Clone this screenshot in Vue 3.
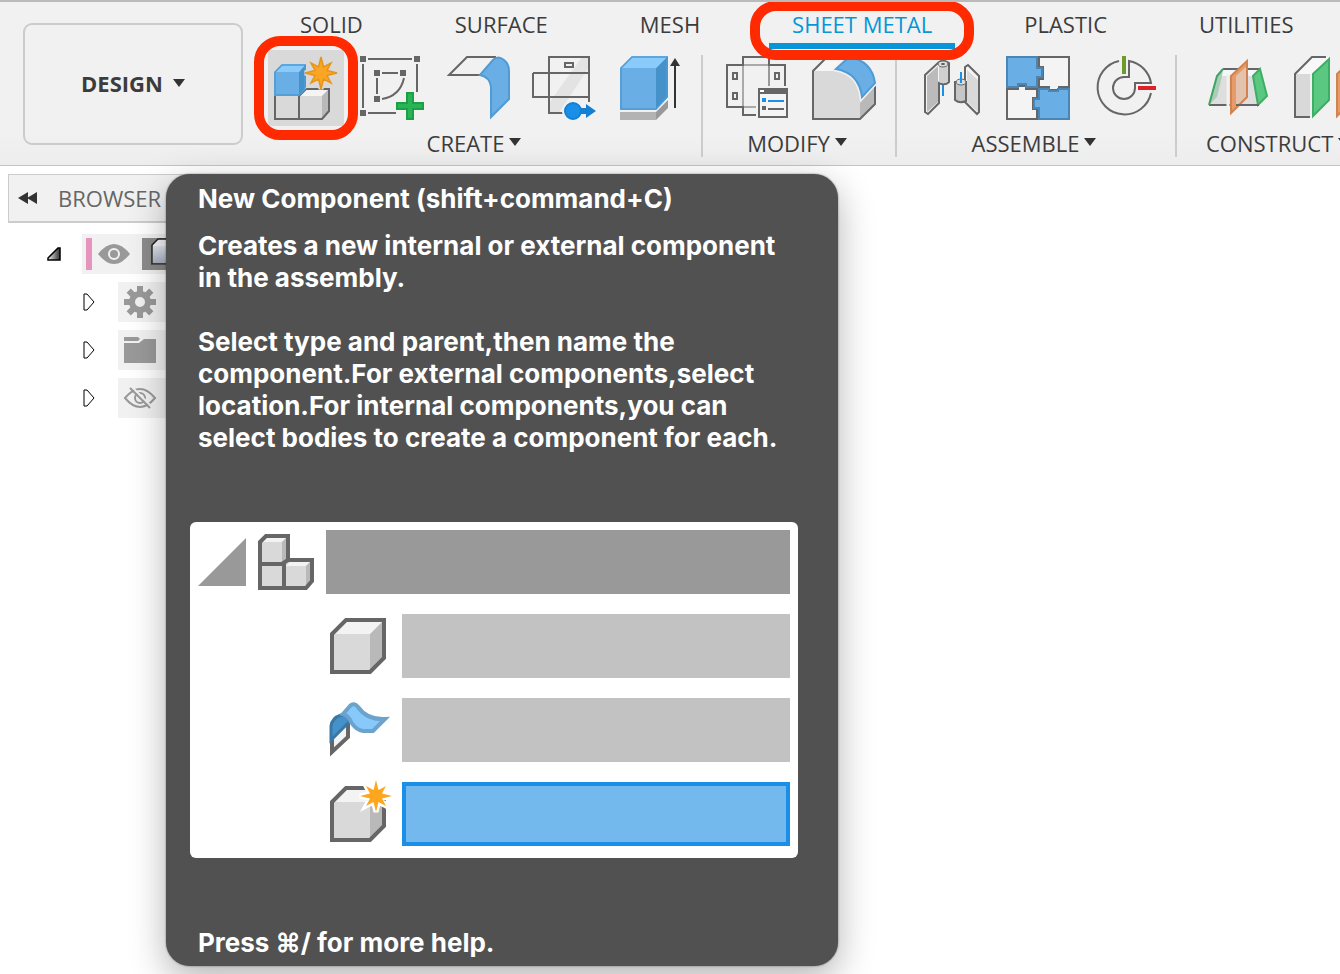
<script setup>
import { ref } from 'vue';

const tabs = ['SOLID', 'SURFACE', 'MESH', 'SHEET METAL', 'PLASTIC', 'UTILITIES'];
const activeTab = ref('SHEET METAL');

const star = '0,-16 2.5,-6 10,-10 6,-2.5 16,0 6,2.5 10,10 2.5,6 0,16 -2.5,6 -10,10 -6,2.5 -16,0 -6,-2.5 -10,-10 -2.5,-6';
</script>

<template>
    <div class="app">
        <header class="toolbar">
            <button class="workspace">
                DESIGN
                <svg class="caret" viewBox="0 0 12 8"><path d="M0 0H12L6 8Z" /></svg>
            </button>

            <div class="ribbon">
                <nav class="tabs">
                    <button
                        v-for="tab in tabs"
                        :key="tab"
                        class="tab"
                        :class="{ active: tab === activeTab, marked: tab === 'SHEET METAL' }"
                        @click="activeTab = tab"
                    >{{ tab }}</button>
                </nav>

                <div class="panels">
                    <section class="panel">
                        <div class="tools">
                            <button class="tool hovered marked" aria-label="New Component">
                                <svg viewBox="0 0 64 64">
                                    <path d="M1 40H25V63H1Z" fill="#d9d9d9" />
                                    <path d="M25 40L32 33H55L48 40Z" fill="#f4f4f4" />
                                    <path d="M25 40H48V63H25Z" fill="#d9d9d9" />
                                    <path d="M48 40L55 33V54L48 63Z" fill="#b9b9b9" />
                                    <path d="M1 40V63H48L55 55V33H32L25 40V63" class="line" />
                                    <path d="M0 16L8 8H32L25 16Z" fill="#8acbfb" />
                                    <path d="M0 16H25V40H0Z" fill="#69afe5" />
                                    <path d="M25 16L32 8V33L25 40Z" fill="#4591ca" />
                                    <path d="M1 39V16L8 9H31V33L25 39Z" fill="none" stroke="#4f9bd5" stroke-width="1.5" />
                                    <g transform="translate(47 17)">
                                        <polygon :points="star" fill="#d9d9d9" stroke="#d9d9d9" stroke-width="5" />
                                        <polygon :points="star" fill="#fba524" stroke="#e6951a" stroke-width="1.5" />
                                    </g>
                                </svg>
                            </button>
                            <button class="tool" aria-label="Create Sketch">
                                <svg viewBox="0 0 64 64">
                                    <path d="M8 3H52M3 8V52M57 8V36M8 57H36M22 17H38M17 22V38M44 22Q40 40 22 43" class="line" />
                                    <path d="M0 0H6V6H0ZM54 0H60V6H54ZM0 54H6V60H0ZM14 14H20V20H14ZM40 14H46V20H40ZM14 40H20V46H14Z" fill="#666" />
                                    <path d="M47 37H53V47H63V53H53V63H47V53H37V47H47Z" fill="#29b456" stroke="#1aa047" stroke-width="2" />
                                </svg>
                            </button>
                            <button class="tool" aria-label="Flange">
                                <svg viewBox="0 0 64 64">
                                    <path d="M50 1H21L3 19H34" class="line" />
                                    <path d="M34 19L47 4Q52 -1 58 4Q63 8 63 15V43L45 61V31Q44 21 34 19Z" fill="#69afe5" stroke="#4f9bd5" stroke-width="2" />
                                </svg>
                            </button>
                            <button class="tool" aria-label="Unfold">
                                <svg viewBox="0 0 64 64">
                                    <path d="M50 1H57V11L27 57H17V47Z" fill="#e3e3e3" />
                                    <path d="M57 46V1H17V57H31M1 17H57M1 17V41H57M33 7H41V11H33Z" class="line" />
                                    <circle cx="41" cy="55" r="11" fill="#f1f1f1" />
                                    <path d="M48 52H54V48L64 55L54 62V58H48Z" fill="#1480d4" />
                                    <circle cx="41" cy="55" r="8" fill="#1a8fe8" stroke="#1480d4" stroke-width="2" />
                                </svg>
                            </button>
                            <button class="tool" aria-label="Extrude">
                                <svg viewBox="0 0 64 64">
                                    <path d="M2 56H38V64H2Z" fill="#b3b3b3" />
                                    <path d="M38 56L50 44V52L38 64Z" fill="#999" />
                                    <path d="M2 12L14 0H50L38 12Z" fill="#8acbfb" />
                                    <path d="M2 12H38V54H2Z" fill="#69afe5" />
                                    <path d="M38 12L50 0V41L38 54Z" fill="#4591ca" />
                                    <path d="M3 53V12L14 1H49V41L38 53Z" fill="none" stroke="#4f9bd5" stroke-width="1.5" />
                                    <path d="M57 52V9" stroke="#333" stroke-width="2" />
                                    <path d="M52 10L57 2L62 10Z" fill="#333" />
                                </svg>
                            </button>
                        </div>
                        <button class="panel-label">CREATE<svg class="caret" viewBox="0 0 12 8"><path d="M0 0H12L6 8Z" /></svg></button>
                    </section>

                    <section class="panel">
                        <div class="tools">
                            <button class="tool" aria-label="Sheet Metal Rules">
                                <svg viewBox="0 0 64 64">
                                    <path d="M17 9H43V30M17 9V51H30" fill="none" stroke="#aaa" stroke-width="2" />
                                    <path d="M59 30V9H43V1H17V9H1V51H17V59H30M7 17H11V23H7ZM7 37H11V43H7ZM49 17H53V23H49Z" class="line" />
                                    <path d="M43 10V30" stroke="#999" stroke-width="2" />
                                    <path d="M33 33H61V61H33Z" fill="#f4f4f4" stroke="#666" stroke-width="2" />
                                    <path d="M32 32H62V38H32Z" fill="#666" />
                                    <path d="M34 34H38V36H34Z" fill="#fff" />
                                    <path d="M36 42H40V46H36ZM42 44H58V46H42Z" fill="#1a8fe8" />
                                    <path d="M36 50H40V54H36ZM42 52H58V54H42Z" fill="#666" />
                                </svg>
                            </button>
                            <button class="tool" aria-label="Fillet">
                                <svg viewBox="0 0 64 64">
                                    <path d="M1 15L15 1H36L24 15Z" fill="#f6f6f6" />
                                    <path d="M1 15H22Q47 19 48 44V63H1Z" fill="#d9d9d9" />
                                    <path d="M48 44L63 30V48L48 63Z" fill="#b9b9b9" />
                                    <path d="M32 1H15L1 15V63H48L63 48V29" class="line" />
                                    <path d="M24 13L37 1Q60 5 63 27L50 41Q47 17 24 13Z" fill="#69afe5" stroke="#f1f1f1" stroke-width="5" />
                                    <path d="M24 13L37 1Q60 5 63 27L50 41Q47 17 24 13Z" fill="#69afe5" stroke="#4f9bd5" stroke-width="2" />
                                </svg>
                            </button>
                        </div>
                        <button class="panel-label">MODIFY<svg class="caret" viewBox="0 0 12 8"><path d="M0 0H12L6 8Z" /></svg></button>
                    </section>

                    <section class="panel">
                        <div class="tools">
                            <button class="tool" aria-label="Joint">
                                <svg viewBox="0 0 64 64">
                                    <path d="M5 19L19 6Q24 3 29 7V26Q25 30 19 27V47L8 58L5 56Z" fill="#f4f4f4" class="outline" />
                                    <path d="M7 20L18 10V46L7 56Z" fill="#bbb" />
                                    <path d="M19 9V26Q24 29 28 25V9Z" fill="#cfcfcf" />
                                    <ellipse cx="23" cy="8" rx="5" ry="3" fill="#ddd" stroke="#666" />
                                    <ellipse cx="23" cy="8" rx="2" ry="1" fill="#555" />
                                    <path d="M23 29V40" stroke="#1a8fe8" stroke-width="2" />
                                    <path d="M45 24V11L48 9L59 20V56L57 58L45 46Z" fill="#f4f4f4" class="outline" />
                                    <path d="M47 14L58 24V56L47 46Z" fill="#d9d9d9" />
                                    <path d="M35 26V44Q40 48 46 45V26Z" fill="#c6c6c6" class="outline" />
                                    <ellipse cx="41" cy="26" rx="5" ry="3" fill="#ddd" stroke="#666" />
                                    <path d="M41 16V27" stroke="#1a8fe8" stroke-width="2" />
                                </svg>
                            </button>
                            <button class="tool" aria-label="Rigid Group">
                                <svg viewBox="0 0 64 64">
                                    <path d="M33 1H63V31H53V34H43V31H33V23H37V11H33Z" fill="#f4f4f4" class="outline" />
                                    <path d="M1 33H12V30H20V33H31V42H27V53H31V63H1Z" fill="#f4f4f4" class="outline" />
                                    <path d="M1 1H31V12H36V21H31V31H20V28H12V31H1Z" fill="#69afe5" stroke="#4a86b5" stroke-width="2" />
                                    <path d="M33 33H43V35H52V33H63V63H33V52H28V43H33Z" fill="#69afe5" stroke="#4a86b5" stroke-width="2" />
                                </svg>
                            </button>
                            <button class="tool" aria-label="Joint Origin">
                                <svg viewBox="0 0 64 64">
                                    <path d="M27 5A27 27 0 1 0 59 37M32 21A11 11 0 1 0 43 32V27H59A27 27 0 0 0 37 5V21H32" class="line" />
                                    <path d="M30 0H34V18H30Z" fill="#6d9b2c" />
                                    <path d="M46 30H64V34H46Z" fill="#dd2127" />
                                </svg>
                            </button>
                        </div>
                        <button class="panel-label">ASSEMBLE<svg class="caret" viewBox="0 0 12 8"><path d="M0 0H12L6 8Z" /></svg></button>
                    </section>

                    <section class="panel wide">
                        <div class="tools">
                            <button class="tool" aria-label="Midplane">
                                <svg viewBox="0 0 64 64">
                                    <path d="M11 20H48L53 49H3Z" fill="#dedede" />
                                    <path d="M17 13H54L47 20H11Z" fill="#f6f6f6" />
                                    <path d="M3 49L11 20L17 13L16 20L11 41Z" fill="#abcdb8" />
                                    <path d="M17 13H54M3 49H53" class="line" />
                                    <path d="M17 13L11 20L3 49" fill="none" stroke="#3ba561" stroke-width="2" />
                                    <path d="M47 20L54 13L61 40L52 49Z" fill="#5ac880" stroke="#3eae64" stroke-width="2" />
                                    <path d="M22 18V62" stroke="#f1f1f1" stroke-width="3" />
                                    <path d="M30 17L42 5V41L30 52Z" fill="#e3c3ae" />
                                    <path d="M42 5L25 20V57L30 52V20L42 9Z" fill="#e79b68" />
                                    <path d="M25 20L41 5V41L25 57Z" fill="none" stroke="#d08350" stroke-width="2" />
                                    <path d="M30 49H53" class="line" />
                                </svg>
                            </button>
                            <button class="tool" aria-label="Offset Plane">
                                <svg viewBox="0 0 64 64">
                                    <path d="M3 18L20 1H38L20 18Z" fill="#f8f8f8" />
                                    <path d="M3 18H18V61H3Z" fill="#d9d9d9" />
                                    <path d="M18 61H3V18L20 1H34" class="line" />
                                    <path d="M21 18L37 3V44L21 60Z" fill="#5ac880" stroke="#3eae64" stroke-width="2" />
                                    <path d="M45 18L61 3V44L45 60Z" fill="#e79b68" stroke="#d08350" stroke-width="2" />
                                </svg>
                            </button>
                        </div>
                        <button class="panel-label">CONSTRUCT<svg class="caret" viewBox="0 0 12 8"><path d="M0 0H12L6 8Z" /></svg></button>
                    </section>
                </div>
            </div>
        </header>

        <aside class="browser">
            <div class="browser-head">
                <button class="collapse" aria-label="Collapse browser">
                    <svg viewBox="0 0 20 12"><path d="M0 6L10 0V12ZM9 6L19 0V12Z" fill="#333" /></svg>
                </button>
                BROWSER
            </div>
            <ul class="tree">
                <li class="node root">
                    <svg class="arrow-open" viewBox="0 0 14 14">
                        <defs>
                            <linearGradient id="arrowFill" x1="0" y1="0" x2="1" y2="0">
                                <stop offset="0" stop-color="#eee" />
                                <stop offset="1" stop-color="#333" />
                            </linearGradient>
                        </defs>
                        <path d="M1 13V11L11 1H13V13Z" fill="url(#arrowFill)" stroke="#000" stroke-width="1.5" />
                    </svg>
                    <div class="node-body">
                        <span class="stripe"></span>
                        <svg class="node-icon" viewBox="0 0 32 32">
                            <path d="M0 16Q16 -4 32 16Q16 36 0 16Z" fill="#999" />
                            <circle cx="16" cy="16" r="5" fill="#999" stroke="#f1f1f1" stroke-width="2" />
                        </svg>
                        <span class="node-type">
                            <svg viewBox="0 0 32 32">
                                <defs>
                                    <linearGradient id="cubeFill" x1="0" y1="0" x2="0" y2="1">
                                        <stop offset="0" stop-color="#e3e6ee" />
                                        <stop offset="1" stop-color="#a9afc0" />
                                    </linearGradient>
                                </defs>
                                <path d="M1 8L7 1H32V27H1Z" fill="#f4f4f6" />
                                <path d="M2 8H32V26H2Z" fill="url(#cubeFill)" />
                                <path d="M32 1H7L1 7V26H32" fill="none" stroke="#222" stroke-width="1.5" />
                            </svg>
                        </span>
                    </div>
                </li>
                <li class="node">
                    <svg class="arrow" viewBox="0 0 12 18"><path d="M1 1H4L11 9L4 17H1Z" /></svg>
                    <div class="node-body">
                        <svg class="node-icon" viewBox="0 0 32 32">
                            <g fill="#999">
                                <path d="M13 0H19V32H13ZM0 13H32V19H0Z" />
                                <path d="M13 0H19V32H13ZM0 13H32V19H0Z" transform="rotate(45 16 16)" />
                            </g>
                            <circle cx="16" cy="16" r="8" fill="#f1f1f1" stroke="#999" stroke-width="6" />
                        </svg>
                    </div>
                </li>
                <li class="node">
                    <svg class="arrow" viewBox="0 0 12 18"><path d="M1 1H4L11 9L4 17H1Z" /></svg>
                    <div class="node-body">
                        <svg class="node-icon" viewBox="0 0 32 32">
                            <path d="M0 3H14L16 5L14 7H0ZM0 9H15L20 5H32V29H0Z" fill="#999" />
                        </svg>
                    </div>
                </li>
                <li class="node">
                    <svg class="arrow" viewBox="0 0 12 18"><path d="M1 1H4L11 9L4 17H1Z" /></svg>
                    <div class="node-body">
                        <svg class="node-icon" viewBox="0 0 32 32">
                            <path d="M1 16Q16 -2 31 16Q16 34 1 16Z" fill="none" stroke="#999" stroke-width="2" />
                            <circle cx="16" cy="16" r="5" fill="none" stroke="#999" stroke-width="2" />
                            <path d="M8 5L28 25" stroke="#f1f1f1" stroke-width="2" />
                            <path d="M6 6L26 26" stroke="#999" stroke-width="2" />
                        </svg>
                    </div>
                </li>
            </ul>
        </aside>

        <div class="tooltip" role="tooltip">
            <h2>New Component (shift+command+C)</h2>
            <p>Creates a new internal or external component<br>in the assembly.</p>
            <p>Select type and parent,then name the<br>component.For external components,select<br>location.For internal components,you can<br>select bodies to create a component for each.</p>

            <div class="preview">
                <div class="preview-row">
                    <svg class="twisty" viewBox="0 0 48 48"><path d="M0 48L48 0V48Z" fill="#999" /></svg>
                    <svg class="glyph" viewBox="0 0 56 56">
                        <path d="M2 8L8 2H30V26H54V47L48 54H2Z" fill="#d9d9d9" />
                        <path d="M4 8L8 4H28L24 8ZM28 32L32 28H52L48 32Z" fill="#f3f3f3" />
                        <path d="M24 8L28 4V26L24 28ZM48 32L52 28V48L48 52Z" fill="#b9b9b9" />
                        <path d="M2 8L8 2H30V26H54V47L48 54H2ZM2 30H24L30 26M26 54V30" class="thick" />
                    </svg>
                    <span class="bar dark"></span>
                </div>
                <div class="preview-row child">
                    <svg class="glyph" viewBox="0 0 56 56">
                        <path d="M2 16L16 2H54L40 16Z" fill="#f3f3f3" />
                        <path d="M2 16H40V54H2Z" fill="#d9d9d9" />
                        <path d="M40 16L54 2V40L40 54Z" fill="#b9b9b9" />
                        <path d="M2 16L16 2H54V40L40 54H2Z" class="thick" />
                    </svg>
                    <span class="bar"></span>
                </div>
                <div class="preview-row child">
                    <svg class="glyph" viewBox="0 0 56 56">
                        <path d="M2 36V50L18 35V20Z" fill="#f3f3f3" class="thick" />
                        <path d="M1 38V24Q2 16 11 13L19 12V20Z" fill="#4591ca" stroke="#3878a8" stroke-width="3" />
                        <path d="M13 12L20 4Q24 0 28 5Q37 18 55 17L43 29H33Q26 28 21 20Q18 13 13 12Z" fill="#87c9fb" stroke="#6ba3cd" stroke-width="4" />
                    </svg>
                    <span class="bar"></span>
                </div>
                <div class="preview-row child">
                    <svg class="glyph" viewBox="0 0 56 56">
                        <path d="M2 16L16 2H54L40 16Z" fill="#f3f3f3" />
                        <path d="M2 16H40V54H2Z" fill="#d9d9d9" />
                        <path d="M40 16L54 2V40L40 54Z" fill="#b9b9b9" />
                        <path d="M2 16L16 2H54V40L40 54H2Z" class="thick" />
                        <g transform="translate(46 10)">
                            <polygon :points="star" fill="#fff" stroke="#fff" stroke-width="5" />
                            <polygon :points="star" fill="#ffa61f" />
                        </g>
                    </svg>
                    <span class="bar selected"></span>
                </div>
            </div>

            <p class="help">Press ⌘/ for more help.</p>
        </div>
    </div>
</template>

<style>
body {
    margin: 0;
    background: #fff;
}
</style>

<style scoped>
.app {
    position: relative;
    min-height: 100vh;
    overflow: hidden;
    font-family: 'Open Sans', 'Noto Sans', sans-serif;
    font-size: 22px;
    font-weight: 500;
    color: #3c3c3c;
}

button {
    border: none;
    padding: 0;
    background: none;
    color: inherit;
    font: inherit;
    cursor: pointer;
}

svg {
    display: block;
    flex: none;
    overflow: visible;
}

.line,
.outline,
.thick {
    stroke: #666;
    stroke-width: 2;
}

.line {
    fill: none;
}

.thick {
    stroke-width: 4;
}

path.thick:not([fill]) {
    fill: none;
}

.caret {
    width: 12px;
    height: 8px;
    fill: #333;
}

.toolbar {
    display: flex;
    overflow: hidden;
    background: linear-gradient(#f1f1f1 80%, #ededed);
    border-top: 2px solid #bbb;
    border-bottom: 1px solid #c4c4c4;
}

.workspace {
    display: flex;
    flex: none;
    align-items: center;
    justify-content: center;
    gap: 10px;
    box-sizing: border-box;
    width: 220px;
    height: 122px;
    margin: 21px 8px 0 23px;
    padding-bottom: 2px;
    border: 2px solid #ccc;
    border-radius: 9px;
    font-weight: 700;
}

.ribbon {
    flex: none;
}

.tabs {
    display: flex;
    gap: 46px;
    padding-left: 26px;
}

.tab {
    position: relative;
    height: 47px;
    padding: 3px 23px 0;
    border-bottom: 6px solid transparent;
    line-height: 38px;
    white-space: nowrap;
}

.tab.active {
    border-bottom-color: #0696d7;
    color: #0696d7;
}

/* red call-out rings */
.marked::after {
    content: '';
    position: absolute;
    z-index: 2;
    border: 10px solid #ff2a00;
    border-radius: 26px;
    pointer-events: none;
}

.tab.marked::after {
    inset: -1px -19px -17px;
}

.tool.marked::after {
    inset: -14px;
}

.panels {
    display: flex;
    padding: 6px 0 8px;
}

.panel {
    display: flex;
    flex-direction: column;
    align-items: center;
    padding: 1px 19px 0 23px;
    border-right: 2px solid #ccc;
}

.panel.wide {
    align-items: flex-start;
    padding-left: 29px;
}

.tools {
    display: flex;
    gap: 22px;
}

.tool {
    position: relative;
    width: 64px;
    height: 64px;
}

.tool.hovered {
    margin: -6px;
    padding: 6px;
    width: 76px;
    height: 76px;
    background: #d9d9d9;
}

.panel-label {
    display: flex;
    align-items: center;
    gap: 5px;
    height: 37px;
    margin-top: auto;
    padding: 9px 8px 0 0;
    line-height: 28px;
}

.panel-label .caret {
    margin-bottom: 2px;
}

.browser {
    padding: 8px 0 0 8px;
    width: 300px;
    color: #666;
}

.browser-head {
    display: flex;
    align-items: center;
    gap: 20px;
    height: 46px;
    padding-left: 9px;
    background: #f1f1f1;
    border: 1px solid #ccc;
    border-bottom-width: 2px;
    font-weight: 400;
}

.collapse {
    width: 20px;
    height: 12px;
}

.tree {
    display: flex;
    flex-direction: column;
    gap: 8px;
    margin: 11px 0 0;
    padding: 0;
    list-style: none;
}

.node {
    display: flex;
    align-items: center;
    gap: 23px;
    padding-left: 75px;
}

.node.root {
    gap: 21px;
    padding-left: 39px;
}

.node-body {
    display: flex;
    flex: 1;
    align-items: center;
    height: 40px;
    padding-left: 6px;
    background: #f1f1f1;
}

.root .node-body {
    gap: 6px;
    padding-left: 4px;
}

.arrow {
    width: 12px;
    height: 18px;
    fill: #fff;
    stroke: #000;
}

.arrow-open {
    width: 14px;
    height: 14px;
}

.node-icon {
    width: 32px;
    height: 32px;
}

.stripe {
    width: 6px;
    height: 32px;
    background: #e893bd;
}

.node-type {
    width: 32px;
    height: 32px;
    margin-left: 6px;
    padding-left: 9px;
    background: #8b8b8b;
}

.tooltip {
    position: absolute;
    z-index: 10;
    top: 174px;
    left: 166px;
    box-sizing: border-box;
    width: 672px;
    padding: 9px 32px 7px;
    border-radius: 24px;
    background: #515151;
    box-shadow: 0 0 2px rgba(0, 0, 0, 0.5), 0 12px 36px rgba(0, 0, 0, 0.3);
    color: #fff;
    font-family: Inter, 'Noto Sans', sans-serif;
    font-size: 26px;
    font-weight: 700;
    line-height: 32px;
    white-space: nowrap;
}

.tooltip h2 {
    margin: 0 0 15px;
    font: inherit;
}

.tooltip p {
    margin: 0 0 32px;
}

.preview {
    display: flex;
    flex-direction: column;
    gap: 20px;
    margin: 68px 8px 0 -8px;
    padding: 8px 8px 12px;
    border-radius: 6px;
    background: #fff;
}

.preview-row {
    display: flex;
    align-items: center;
    gap: 12px;
}

.preview-row.child {
    gap: 16px;
    padding-left: 132px;
}

.twisty {
    width: 48px;
    height: 48px;
}

.glyph {
    width: 56px;
    height: 56px;
}

.bar {
    flex: 1;
    box-sizing: border-box;
    height: 64px;
    background: #c2c2c2;
}

.bar.dark {
    background: #999;
}

.bar.selected {
    border: 4px solid #1a8fe8;
    background: #74b9ee;
}

.tooltip .help {
    margin: 69px 0 0;
}
</style>
